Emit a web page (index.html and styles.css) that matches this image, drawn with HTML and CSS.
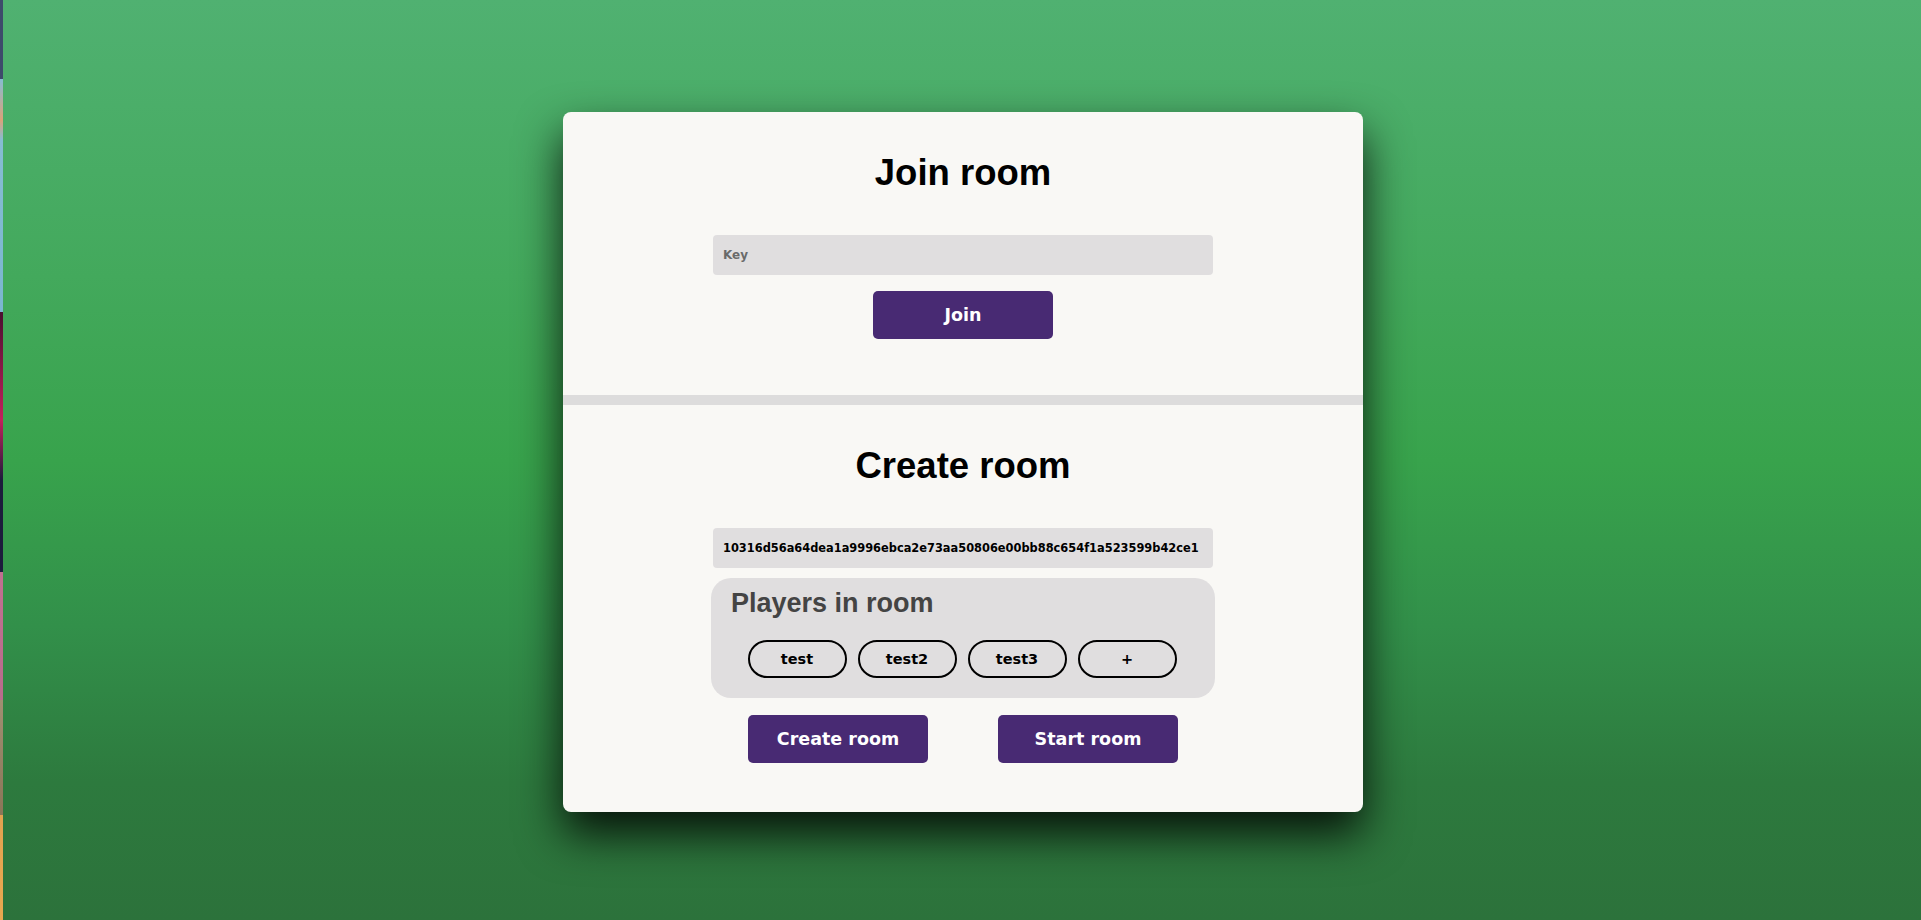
FILE: index.html
```html
<!DOCTYPE html>
<html lang="en">
  <head>
    <meta charset="utf-8">
    <title>Rooms</title>
    <link rel="stylesheet" href="styles.css">
  </head>
  <body>
	<div class="card">

		<div class="section joinSection">
			<h1 class="title">Join room</h1>
			<input type="text" class="field keyInput" placeholder="Key">
			<button class="btn">Join</button>
		</div>

		<div class="divider"></div>

		<div class="section createSection">
			<h1 class="title">Create room</h1>
			<input type="text" class="field hashInput" value="10316d56a64dea1a9996ebca2e73aa50806e00bb88c654f1a523599b42ce1" readonly>
			<div class="players">
				<h2 class="playersTitle">Players in room</h2>
				<div class="playerList">
					<div class="chip">test</div>
					<div class="chip">test2</div>
					<div class="chip">test3</div>
					<div class="chip">+</div>
				</div>
			</div>
			<div class="btnRow">
				<button class="btn">Create room</button>
				<button class="btn">Start room</button>
			</div>
		</div>

	</div>
  </body>
</html>
```

FILE: styles.css
```css
html,body{
	margin:0;
	height:100%;
}
body{
	padding:112px 0 0 5px;
	box-sizing:border-box;
	font-family:"Liberation Sans",Arial,sans-serif;
	background:
		linear-gradient(#3d4b6b 0px,#3d4b6b 79px,#86bcd2 79px,#d9a27a 120px,#86bcd2 140px,#7bb6cf 312px,#4a1030 312px,#c2205c 420px,#1c1c3c 480px,#1c1c3c 572px,#c07090 572px,#b86c8c 700px,#a08f72 700px,#8a7658 815px,#e2a250 815px,#e8a850 100%) no-repeat 0 0/3px 100%,
		linear-gradient(#50b171 0%,#43a95c 30%,#38a34c 50%,#32904a 68%,#2d7a3e 85%,#2c723b 100%);
}
.card{
	width:800px;
	margin:0 auto;
	background:#f9f8f5;
	border-radius:8px;
	box-shadow:0 22px 45px rgba(0,0,0,.85);
	overflow:hidden;
}
.section{
	display:flex;
	flex-direction:column;
	align-items:center;
	padding-top:40px;
}
.joinSection{
	padding-bottom:56px;
}
.createSection{
	padding-bottom:49px;
}
.divider{
	height:10px;
	background:#dddcdc;
}
.title{
	margin:0 0 41px;
	font-size:36.5px;
	line-height:42px;
	font-weight:bold;
	color:#000;
}
.field{
	width:500px;
	height:40px;
	box-sizing:border-box;
	border:0;
	border-radius:4px;
	background:#e0dedf;
	padding:0 10px;
	font-family:"DejaVu Sans",Verdana,sans-serif;
	font-weight:bold;
	outline:none;
}
.keyInput{
	font-size:12px;
}
.keyInput::placeholder{
	color:#6a6a6a;
}
.hashInput{
	padding-right:4px;
	font-size:11.4px;
	color:#000;
}
.btn{
	width:180px;
	height:48px;
	border:0;
	border-radius:5px;
	background:#482a73;
	color:#fff;
	font-family:"DejaVu Sans",Verdana,sans-serif;
	font-weight:bold;
	font-size:17.5px;
	cursor:pointer;
}
.joinSection .btn{
	margin-top:16px;
}
.players{
	width:504px;
	margin-top:10px;
	box-sizing:border-box;
	padding:10px 20px 20px;
	background:#e0dedf;
	border-radius:20px;
}
.playersTitle{
	margin:0 0 21px;
	font-size:27px;
	line-height:31px;
	color:#444;
}
.playerList{
	display:flex;
	justify-content:center;
	gap:11px;
	margin-left:-2px;
}
.chip{
	width:99px;
	height:38px;
	box-sizing:border-box;
	border:2px solid #000;
	border-radius:19px;
	display:flex;
	align-items:center;
	justify-content:center;
	font-family:"DejaVu Sans",Verdana,sans-serif;
	font-weight:bold;
	font-size:14.5px;
}
.btnRow{
	display:flex;
	gap:70px;
	margin-top:17px;
}
```
